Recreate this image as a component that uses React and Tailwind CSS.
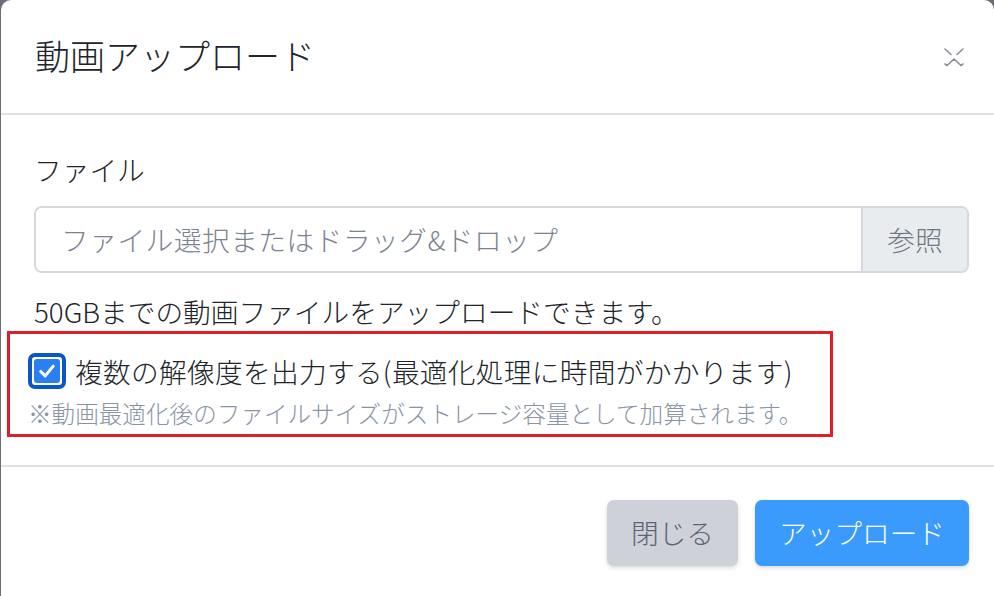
export default function App() {
  const font = { fontFamily: '"Noto Sans CJK JP", "Noto Sans", sans-serif' };
  return (
    <div className="w-[994px] h-[596px] bg-[#6b6e7a] overflow-hidden" style={font}>
      <div className="ml-[1px] h-[620px] bg-white rounded-[10px] flex flex-col font-light">
        {/* header */}
        <div className="h-[115px] flex items-center justify-between pl-[34px] pr-[28px] border-b-2 border-[#dee2e6] shrink-0">
          <h5 className="text-[35px] leading-[40px] text-[#212529] font-light -mt-[4px]">動画アップロード</h5>
          <svg width="24" height="24" viewBox="0 0 24 24" className="mt-[2px]">
            <g stroke="#8a8d96" strokeWidth="1.6" fill="none" strokeLinecap="round">
              <path d="M3 3 L9 8.5" />
              <path d="M21 3 L15 8.5" />
              <path d="M3 18 L5 19.5 L12 13 L19 19.5 L21 18" />
            </g>
          </svg>
        </div>
        {/* body */}
        <div className="relative pl-[33px] pr-[25px] pt-[34px] pb-[36px] border-b-2 border-[#dee2e6] shrink-0">
          <label className="block text-[27.7px] leading-[40px] text-[#212529]">ファイル</label>
          <div className="mt-[17px] flex h-[67px] border-2 border-[#d5d9de] rounded-[8px] overflow-hidden">
            <div className="flex-1 flex items-center pl-[25px] text-[27.7px] text-[#7b8391] bg-white tracking-[0.5px]">
              ファイル選択またはドラッグ&amp;ドロップ
            </div>
            <div className="w-[106px] flex items-center justify-center bg-[#e9ecef] border-l-2 border-[#d5d9de] text-[27.7px] text-[#6f7783]">
              参照
            </div>
          </div>
          <p className="mt-[18px] text-[27.7px] leading-[40px] text-[#212529]">50GBまでの動画ファイルをアップロードできます。</p>
          <div className="pt-[20px] -ml-[6px]">
            <div className="flex items-center h-[40px]">
              <div className="w-[38px] h-[36px] rounded-[7px] border-[4px] border-[#0a56c8] bg-white p-[2px] shrink-0">
                <div className="w-full h-full rounded-[3px] bg-[#2a80f2] flex items-center justify-center">
                  <svg width="18" height="16" viewBox="0 0 20 18">
                    <path d="M3 9.5 L8 14.5 L17 3.5" stroke="white" strokeWidth="3.4" fill="none" strokeLinecap="round" strokeLinejoin="round" />
                  </svg>
                </div>
              </div>
              <span className="ml-[9px] text-[27.7px] leading-[40px] text-[#212529] tracking-[0.3px]">複数の解像度を出力する(最適化処理に時間がかかります)</span>
            </div>
            <p className="mt-[6px] text-[23.6px] leading-[32px] text-[#8a94a6]">※動画最適化後のファイルサイズがストレージ容量として加算されます。</p>
          </div>
          <div className="absolute left-[6px] top-[216px] w-[826px] h-[106px] border-[3px] border-[#e31e2a] pointer-events-none"></div>
        </div>
        {/* footer */}
        <div className="flex justify-end gap-[17px] pt-[33px] pr-[25px]">
          <button className="w-[131px] h-[66px] rounded-[7px] bg-[#ced1d8] text-[27.7px] font-light text-[#5c6473] shadow-[0_2px_4px_rgba(0,0,0,0.15)]">閉じる</button>
          <button className="w-[214px] h-[66px] rounded-[7px] bg-[#3a9bfd] text-[27.7px] font-light text-white shadow-[0_2px_4px_rgba(0,0,0,0.15)]">アップロード</button>
        </div>
      </div>
    </div>
  );
}
